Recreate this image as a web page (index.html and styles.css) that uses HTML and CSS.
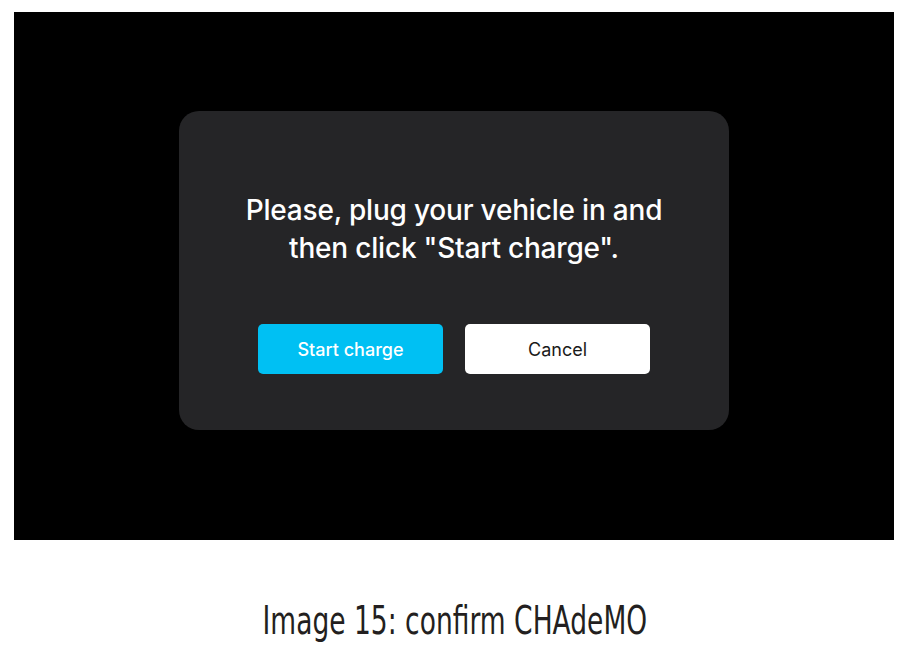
FILE: index.html
```html
<!DOCTYPE html>
<html lang="en">
<head>
  <meta charset="UTF-8">
  <title>Confirm CHAdeMO</title>
  <link rel="stylesheet" href="styles.css">
</head>
<body>
  <div class="screen">
    <div class="dialog">
      <p class="message">Please, plug your vehicle in and<br>then click "Start charge".</p>
      <div class="actions">
        <button class="btn btn-primary">Start charge</button>
        <button class="btn btn-secondary">Cancel</button>
      </div>
    </div>
  </div>
  <p class="caption"><span>Image 15: confirm CHAdeMO</span></p>
</body>
</html>
```

FILE: styles.css
```css
body {
  margin: 0;
  background: #fff;
  font-family: Inter, "Noto Sans", sans-serif;
}
.screen {
  margin: 12px 0 0 14px;
  width: 880px;
  height: 528px;
  background: #000;
  padding-top: 99px;
  box-sizing: border-box;
}
.dialog {
  margin-left: 165px;
  width: 550px;
  height: 319px;
  background: #252527;
  border-radius: 20px;
  box-sizing: border-box;
  padding-top: 80px;
  text-align: center;
}
.message {
  margin: 0;
  color: #fff;
  font-size: 28px;
  font-weight: 500;
  line-height: 38px;
  letter-spacing: -0.2px;
}
.actions {
  display: flex;
  justify-content: center;
  gap: 22px;
  margin-top: 57px;
}
.btn {
  width: 185px;
  height: 50px;
  border: none;
  border-radius: 5px;
  font-family: Inter, "Noto Sans", sans-serif;
  font-size: 18px;
}
.btn-primary {
  background: #00c0f3;
  color: #fff;
  font-weight: 500;
}
.btn-secondary {
  background: #fff;
  color: #1a1a1a;
}
.caption {
  margin: 58px 0 0;
  text-align: center;
  font-family: "DejaVu Sans", sans-serif;
  font-size: 39px;
  color: #231f20;
}
.caption span {
  display: inline-block;
  transform: scaleX(0.68);
}
```
